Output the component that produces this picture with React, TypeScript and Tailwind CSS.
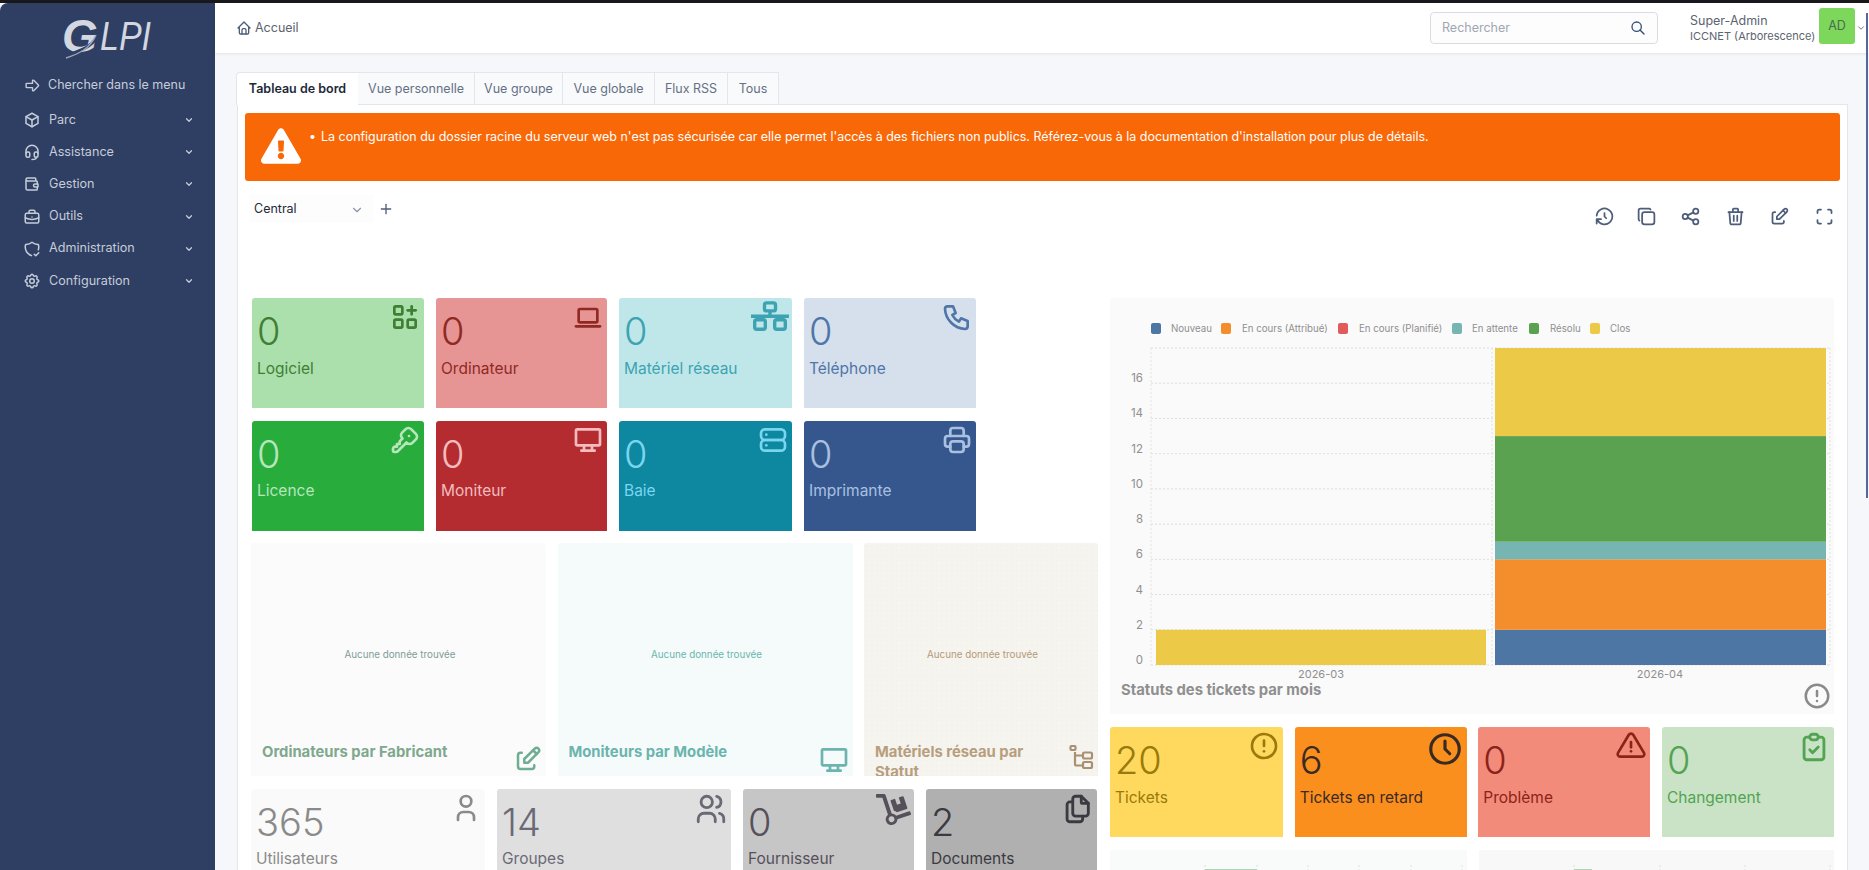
import type { ComponentType, ReactNode } from "react";
import { FaDolly, FaExclamationTriangle } from "react-icons/fa";
import {
  TbAlertCircle,
  TbAlertTriangle,
  TbApps,
  TbArrowBigRight,
  TbBox,
  TbBriefcase,
  TbChevronDown,
  TbClipboardCheck,
  TbClock,
  TbCopy,
  TbDeviceDesktop,
  TbDeviceLaptop,
  TbEdit,
  TbFiles,
  TbHeadset,
  TbHistory,
  TbHome,
  TbKey,
  TbMaximize,
  TbPhone,
  TbPlus,
  TbPrinter,
  TbSearch,
  TbServer,
  TbSettings,
  TbShare,
  TbShieldCheck,
  TbTrash,
  TbUser,
  TbUsers,
  TbWallet,
} from "react-icons/tb";

const menu = [
  { label: "Parc", icon: TbBox },
  { label: "Assistance", icon: TbHeadset },
  { label: "Gestion", icon: TbWallet },
  { label: "Outils", icon: TbBriefcase },
  { label: "Administration", icon: TbShieldCheck },
  { label: "Configuration", icon: TbSettings },
];

const tabs = [
  { label: "Tableau de bord", width: "w-[122px]" },
  { label: "Vue personnelle", width: "w-[117px]" },
  { label: "Vue groupe", width: "w-[88px]" },
  { label: "Vue globale", width: "w-[92px]" },
  { label: "Flux RSS", width: "w-[73px]" },
  { label: "Tous", width: "w-[51px]" },
];

const tools = [TbCopy, TbShare, TbTrash, TbEdit, TbMaximize];

function NetworkIcon({ size = 38 }: { size?: number }) {
  return (
    <svg width={size} height={size * 0.8} viewBox="0 0 38 30" fill="none" stroke="currentColor" strokeWidth="3.4">
      <rect x="13.5" y="1.7" width="11" height="8" rx="2" />
      <path d="M19 10v5M0 15h38M9 15v3M29 15v3" />
      <rect x="3.7" y="18.5" width="10.6" height="9.5" rx="2" />
      <rect x="23.7" y="18.5" width="10.6" height="9.5" rx="2" />
    </svg>
  );
}

function TreeIcon({ size = 26 }: { size?: number }) {
  return (
    <svg width={size} height={size} viewBox="0 0 26 26" fill="none" stroke="currentColor" strokeWidth="2.2">
      <rect x="1.5" y="2" width="5" height="4" rx="1" />
      <path d="M6 8v12c0 1 .5 1.5 1.5 1.5H14M6 11.5h8" />
      <rect x="14" y="8.5" width="9" height="6" rx="1.5" />
      <rect x="14" y="18" width="9" height="6" rx="1.5" />
    </svg>
  );
}

type StatProps = {
  value: string;
  label: string;
  width: string;
  box: string;
  icon: ReactNode;
};

// number + label tile, colours come through box
function Stat({ value, label, width, box, icon }: StatProps) {
  return (
    <div className={`relative h-[110px] shrink-0 overflow-hidden rounded-t-[3px] pl-[5px] ${width} ${box}`}>
      <div className="mt-[11px] h-[44px] text-[38px] font-light leading-[44px]">{value}</div>
      <div className="mt-[5.5px] text-[15.5px] leading-[20px]">{label}</div>
      <div className="absolute right-[3px] top-[3px]">{icon}</div>
    </div>
  );
}

type PanelProps = {
  title: string;
  width: string;
  box: string;
  note: string;
  heading: string;
  icon: ReactNode;
};

function EmptyPanel({ title, width, box, note, heading, icon }: PanelProps) {
  return (
    <div className={`flex h-[233px] shrink-0 flex-col overflow-hidden rounded-t-[3px] ${width} ${box}`}>
      <div className={`flex h-[199px] shrink-0 items-center justify-center pl-[3px] pt-[26px] text-[9.8px] ${note}`}>
        Aucune donnée trouvée
      </div>
      <div className="flex items-start justify-between gap-2 pl-[11px] pr-[3px]">
        <div className={`text-[14.8px] font-bold leading-[20px] ${heading}`}>{title}</div>
        <div className="shrink-0 pt-[2px]">{icon}</div>
      </div>
    </div>
  );
}

function TicketsChart() {
  const y = (v: number) => 367 - v * 17.61;
  const legend = [
    { x: 41, c: "#4e76a4", t: "Nouveau", tx: 61 },
    { x: 111, c: "#f48d2b", t: "En cours (Attribué)", tx: 132 },
    { x: 228, c: "#e25b5b", t: "En cours (Planifié)", tx: 249 },
    { x: 342, c: "#76b5b1", t: "En attente", tx: 362 },
    { x: 419, c: "#5aa150", t: "Résolu", tx: 440 },
    { x: 480, c: "#ecc947", t: "Clos", tx: 500 },
  ];
  const stack = [
    { from: 0, to: 2, c: "#4e76a4" },
    { from: 2, to: 6, c: "#f48d2b" },
    { from: 6, to: 7, c: "#76b5b1" },
    { from: 7, to: 13, c: "#5aa150" },
    { from: 13, to: 18, c: "#ecc947" },
  ];
  const ticks = [0, 2, 4, 6, 8, 10, 12, 14, 16, 18];
  return (
    <svg width="724" height="384" viewBox="0 0 724 384" className="block">
      {legend.map((l) => (
        <g key={l.t}>
          <rect x={l.x} y={25} width="10" height="11" rx="2" fill={l.c} />
          <text x={l.tx} y={33.5} fontSize="9.7" fill="#8f8f8f">
            {l.t}
          </text>
        </g>
      ))}
      {ticks.map((t) => (
        <line key={t} x1="41" x2="720" y1={y(t)} y2={y(t)} stroke="#dedede" strokeDasharray="2 2" />
      ))}
      {[41, 382, 720].map((x) => (
        <line key={x} x1={x} x2={x} y1={50} y2={367} stroke="#e2e2e2" strokeDasharray="2 2" />
      ))}
      {ticks.slice(0, -1).map((t) => (
        <text key={t} x="33" y={y(t) - 1} textAnchor="end" fontSize="11.5" fill="#8f8f8f">
          {t}
        </text>
      ))}
      <rect x="46" y={y(2)} width="330" height={y(0) - y(2)} fill="#ecc947" />
      {stack.map((s) => (
        <rect key={s.c} x="385" y={y(s.to)} width="331" height={y(s.from) - y(s.to)} fill={s.c} />
      ))}
      <text x="211" y="380" textAnchor="middle" fontSize="11" fill="#8f8f8f">
        2026-03
      </text>
      <text x="550" y="380" textAnchor="middle" fontSize="11" fill="#8f8f8f">
        2026-04
      </text>
    </svg>
  );
}

// top edge of the two charts cut off by the page bottom
function CutChart({ ticks, barX, barW, width, fill }: { ticks: number[]; barX: number; barW: number; width: number; fill: string }) {
  return (
    <svg width={width} height="40" className={`block ${fill}`}>
      {ticks.map((x) => (
        <line key={x} x1={x} x2={x} y1="15" y2="40" stroke="#e0e0e0" strokeDasharray="2 2" />
      ))}
      <rect x={barX} y="19" width={barW} height="21" fill="#aad8b0" />
    </svg>
  );
}

function SideItem({ icon: Icon, label }: { icon: ComponentType<{ size?: number }>; label: string }) {
  return (
    <div className="flex h-[32.2px] items-center pl-[23px] pr-[21px] text-[12.6px] text-[#c6ccd8]">
      <Icon size={18} />
      <span className="ml-[8px] flex-1">{label}</span>
      <TbChevronDown size={10} strokeWidth={3} />
    </div>
  );
}

export default function App() {
  return (
    <div className="relative flex h-[870px] w-[1869px] overflow-hidden border-t-[3px] border-[#17171c] bg-[#f5f7fb] font-['Inter',sans-serif]">
      {/* Sidebar */}
      <aside className="w-[215px] shrink-0 rounded-tl-lg bg-[#2f3f64]">
        <div className="relative flex h-[66px] items-center pl-[62px] font-['Liberation_Sans',sans-serif] italic text-[#d3d7e0]">
          <span className="text-[46px] font-bold leading-none">G</span>
          <span className="ml-[2px] origin-left scale-x-[0.85] text-[40px] leading-none">LPI</span>
          <svg width="60" height="30" viewBox="0 0 60 30" className="absolute left-[60px] top-[26px]" fill="none">
            <path d="M4 28C16 22 34 20 40 2" stroke="#2f3f64" strokeWidth="3" />
            <path d="M6 29C18 25 30 20 36 6" stroke="#9aa3b6" strokeWidth="1.5" />
          </svg>
        </div>
        <div className="flex h-[32px] items-center pl-[24px] text-[12.5px] text-[#c6ccd8]">
          <TbArrowBigRight size={17} />
          <span className="ml-[7px]">Chercher dans le menu</span>
        </div>
        <nav className="mt-[3px]">
          {menu.map((m) => (
            <SideItem key={m.label} icon={m.icon} label={m.label} />
          ))}
        </nav>
      </aside>

      <div className="flex min-w-0 flex-1 flex-col">
        {/* Header */}
        <header className="flex h-[50px] shrink-0 items-center bg-white pl-[21px] pr-[3px] shadow-[0_1px_3px_rgba(0,0,0,0.08)]">
          <TbHome size={16} className="text-[#4d5d7a]" />
          <span className="ml-[3px] text-[12.5px] text-[#5c6470]">Accueil</span>
          <div className="ml-auto flex h-[32px] w-[228px] items-center justify-between rounded-[4px] border border-[#d9dde3] bg-[#fdfdfd] pl-[11px] pr-[11px] text-[12.5px] text-[#a0a7b4]">
            Rechercher
            <TbSearch size={16} className="text-[#34507c]" />
          </div>
          <div className="ml-[32px] w-[129px] whitespace-nowrap">
            <div className="text-[12.5px] leading-[16px] text-[#5c6470]">Super-Admin</div>
            <div className="text-[11px] leading-[15px] text-[#5c6470]">ICCNET (Arborescence)</div>
          </div>
          <div className="mb-[4px] flex h-[36px] w-[36px] items-center justify-center rounded-[3px] bg-[#7dd75b] text-[12.5px] text-[#4b6b4f]">
            AD
          </div>
          <TbChevronDown size={10} className="ml-[1px] text-[#5c6470]" />
        </header>

        {/* Main */}
        <main className="flex min-h-0 flex-1 flex-col pl-[22px] pr-[21px] pt-[19px]">
          <div className="-ml-px flex h-[33px] shrink-0">
            {tabs.map((t, i) => (
              <div
                key={t.label}
                className={
                  i === 0
                    ? `flex items-center justify-center rounded-tl-[4px] border-l border-t border-[#e3e6ea] bg-white pt-[1px] text-[12.5px] font-semibold text-[#1d2939] ${t.width}`
                    : `flex items-center justify-center border-b border-r border-t border-[#e3e6ea] bg-[#f9fafc] pt-[1px] text-[12.5px] text-[#667085] ${t.width}`
                }
              >
                {t.label}
              </div>
            ))}
            <div className="flex-1 border-b border-[#e3e6ea]" />
          </div>

          <section className="flex min-h-0 flex-1 flex-col border-x border-[#e3e6ea] bg-white pt-[8px]">
            {/* Warning */}
            <div className="mx-[7px] flex h-[68px] shrink-0 rounded-[3px] bg-[#f96807] pl-[16px] text-white">
              <FaExclamationTriangle size={40} className="mt-[13px] shrink-0" />
              <ul className="ml-[8px] flex pt-[15px] text-[12.46px] leading-[18px]">
                <li className="flex">
                  <span className="mr-[5px]">•</span>
                  La configuration du dossier racine du serveur web n'est pas sécurisée car elle permet l'accès à des fichiers non publics. Référez-vous à la documentation d'installation pour plus de détails.
                </li>
              </ul>
            </div>

            {/* Dashboard selector + tools */}
            <div className="flex h-[117px] shrink-0 items-start pl-[11px] pr-[12px] pt-[14px]">
              <div className="flex h-[28px] w-[125px] items-center justify-between bg-[#fdfdfd] pl-[5px] pr-[10px] pt-[1px] text-[12.5px] text-[#1f2937]">
                Central
                <TbChevronDown size={14} className="text-[#8b95a5]" />
              </div>
              <TbPlus size={16} className="ml-[4px] mt-[6px] text-[#4d5d7a]" />
              <div className="ml-auto mt-[11px] flex items-center text-[#4d5d7a]">
                <TbHistory size={21} className="mr-[20.6px]" />
                <div className="flex gap-[23.6px]">
                  {tools.map((Tool, i) => (
                    <Tool key={i} size={21} />
                  ))}
                </div>
              </div>
            </div>

            {/* Grid */}
            <div className="flex min-h-0 gap-[12px] overflow-hidden pl-[13px]">
              <div className="flex w-[847px] shrink-0 flex-col gap-[12.5px]">
                <div className="ml-px flex gap-[12px]">
                  <Stat value="0" label="Logiciel" width="w-[172px]" box="bg-[#abdfac] text-[#3f7f34]" icon={<TbApps size={32} />} />
                  <Stat value="0" label="Ordinateur" width="w-[171px]" box="bg-[#e69494] text-[#8f2a22]" icon={<TbDeviceLaptop size={32} />} />
                  <Stat value="0" label="Matériel réseau" width="w-[173px]" box="bg-[#bfe7ea] text-[#3da3b2]" icon={<NetworkIcon />} />
                  <Stat value="0" label="Téléphone" width="w-[172px]" box="bg-[#d5e0ec] text-[#4f76a8]" icon={<TbPhone size={32} />} />
                </div>
                <div className="ml-px flex gap-[12px]">
                  <Stat value="0" label="Licence" width="w-[172px]" box="bg-[#28ac3c] text-[#b6e6bc]" icon={<TbKey size={32} />} />
                  <Stat value="0" label="Moniteur" width="w-[171px]" box="bg-[#b42c30] text-[#f3bcbf]" icon={<TbDeviceDesktop size={32} />} />
                  <Stat value="0" label="Baie" width="w-[173px]" box="bg-[#0e87a1] text-[#79d6ee]" icon={<TbServer size={32} />} />
                  <Stat value="0" label="Imprimante" width="w-[172px]" box="bg-[#36578e] text-[#a9c0e0]" icon={<TbPrinter size={32} />} />
                </div>
                <div className="flex gap-[11.5px]">
                  <EmptyPanel
                    title="Ordinateurs par Fabricant"
                    width="w-[295px]"
                    box="bg-[#fbfbfb]"
                    note="text-[#7f9c96]"
                    heading="text-[#7fa88f]"
                    icon={<TbEdit size={30} className="text-[#6fae92]" />}
                  />
                  <EmptyPanel
                    title="Moniteurs par Modèle"
                    width="w-[295px]"
                    box="bg-[#f5fbfa]"
                    note="text-[#6ab5ae]"
                    heading="text-[#6cb4ae]"
                    icon={<TbDeviceDesktop size={32} className="text-[#6cb4ae]" />}
                  />
                  <EmptyPanel
                    title="Matériels réseau par Statut"
                    width="w-[234px]"
                    box="bg-[#f5f4ef] bg-[radial-gradient(#f2f1eb_1px,transparent_1px)] bg-[length:5px_5px]"
                    note="text-[#b59a78]"
                    heading="text-[#b79e7d]"
                    icon={<span className="text-[#a89070]"><TreeIcon /></span>}
                  />
                </div>
                <div className="flex gap-[12px]">
                  <Stat value="365" label="Utilisateurs" width="w-[234px]" box="bg-[#fafafa] text-[#8a8a8a]" icon={<TbUser size={32} />} />
                  <Stat value="14" label="Groupes" width="w-[234px]" box="bg-[#dfdfdf] text-[#6a6a76]" icon={<TbUsers size={34} />} />
                  <Stat value="0" label="Fournisseur" width="w-[171px]" box="bg-[#c6c6c6] text-[#56505a]" icon={<FaDolly size={35} />} />
                  <Stat value="2" label="Documents" width="w-[171px]" box="bg-[#b0b0b0] text-[#3a3a40]" icon={<TbFiles size={34} />} />
                </div>
              </div>

              <div className="flex w-[724px] shrink-0 flex-col gap-[13px]">
                <div className="h-[416px] shrink-0 overflow-hidden rounded-t-[3px] bg-[#fafafa]">
                  <TicketsChart />
                  <div className="flex items-start justify-between pl-[11px] pr-[2px]">
                    <div className="text-[14.8px] font-bold leading-[16px] text-[#8f8f8f]">Statuts des tickets par mois</div>
                    <TbAlertCircle size={30} className="-mt-[1px] text-[#8a8a8a]" />
                  </div>
                </div>
                <div className="flex justify-between">
                  <Stat value="20" label="Tickets" width="w-[173px]" box="bg-[#ffd95e] text-[#9a7a0a]" icon={<TbAlertCircle size={32} />} />
                  <Stat value="6" label="Tickets en retard" width="w-[172px]" box="bg-[#fb8f1e] text-[#3a2a24]" icon={<TbClock size={38} />} />
                  <Stat value="0" label="Problème" width="w-[172px]" box="bg-[#f28b7a] text-[#8c2318]" icon={<TbAlertTriangle size={32} />} />
                  <Stat value="0" label="Changement" width="w-[172px]" box="bg-[#cae3c6] text-[#52a352]" icon={<TbClipboardCheck size={34} />} />
                </div>
                <div className="flex justify-between">
                  <CutChart width={357} fill="bg-[#f9fafa]" barX={95} barW={52} ticks={[95, 147, 198, 249, 301, 352]} />
                  <CutChart width={355} fill="bg-[#f8f8f9]" barX={95} barW={18} ticks={[95, 181, 266, 351]} />
                </div>
              </div>
            </div>
          </section>
        </main>
      </div>

      {/* Scrollbar thumb */}
      <div className="absolute right-[1px] top-[10px] h-[485px] w-[2px] bg-[#5565a0]" />
    </div>
  );
}
